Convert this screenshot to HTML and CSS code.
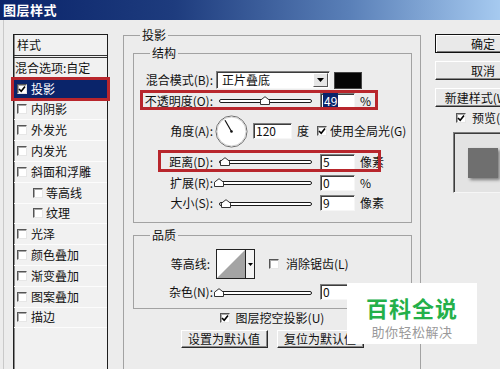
FILE: index.html
```html
<!DOCTYPE html>
<html lang="zh">
<head>
<meta charset="utf-8">
<title>图层样式</title>
<link rel="stylesheet" href="styles.css">
</head>
<body>
<div class="window">
  <div class="titlebar">图层样式</div>
  <div class="dialog">
    <div class="stylelist">
      <div class="sl-head">样式</div>
      <div class="sl-row plain">混合选项:自定</div>
      <div class="sl-row selected hl"><span class="cb"><svg viewBox="0 0 8 8" width="8" height="8"><path d="M1 4 L3.2 6.3 L7 1.5" fill="none" stroke="#000" stroke-width="1.6"/></svg></span>投影</div>
      <div class="sl-row"><span class="cb"></span>内阴影</div>
      <div class="sl-row"><span class="cb"></span>外发光</div>
      <div class="sl-row"><span class="cb"></span>内发光</div>
      <div class="sl-row"><span class="cb"></span>斜面和浮雕</div>
      <div class="sl-row sub"><span class="cb"></span>等高线</div>
      <div class="sl-row sub"><span class="cb"></span>纹理</div>
      <div class="sl-row"><span class="cb"></span>光泽</div>
      <div class="sl-row"><span class="cb"></span>颜色叠加</div>
      <div class="sl-row"><span class="cb"></span>渐变叠加</div>
      <div class="sl-row"><span class="cb"></span>图案叠加</div>
      <div class="sl-row"><span class="cb"></span>描边</div>
    </div>

    <fieldset class="group outer">
      <legend>投影</legend>
      <fieldset class="group inner struct">
        <legend>结构</legend>
        <div class="row h20">
          <span class="lbl">混合模式(B):</span>
          <div class="select sunk"><span>正片叠底</span><span class="sel-btn"><svg viewBox="0 0 7 4" width="7" height="4"><path d="M0 0 H7 L3.5 4 Z" fill="#000"/></svg></span></div>
          <div class="swatch"></div>
        </div>
        <div class="row h21 hl hl-op">
          <span class="lbl">不透明度(O):</span>
          <div class="slider"><div class="track"></div><svg class="thumb" style="left:49%" viewBox="0 0 10 9" width="10" height="9"><path d="M0.5 8.5 V4.2 L5 0.7 L9.5 4.2 V8.5 Z" fill="#fff" stroke="#333"/></svg></div>
          <div class="field sunk"><span class="selected-text">49</span></div>
          <span class="unit">%</span>
        </div>
        <div class="row h40">
          <span class="lbl">角度(A):</span>
          <svg class="dial" viewBox="0 0 33 33" width="33" height="33"><circle cx="16.5" cy="16.5" r="15.5" fill="#fff" stroke="#666"/><circle cx="16.5" cy="16.5" r="14.5" fill="none" stroke="#d0d0d0"/><line x1="16.5" y1="16.5" x2="10" y2="5.3" stroke="#111" stroke-width="1.2"/><circle cx="16.5" cy="16.5" r="1.3" fill="#111"/></svg>
          <div class="field sunk w39">120</div>
          <span class="unit">度</span>
          <span class="cb gl"><svg viewBox="0 0 8 8" width="8" height="8"><path d="M1 4 L3.2 6.3 L7 1.5" fill="none" stroke="#000" stroke-width="1.6"/></svg></span>
          <span class="cbtext">使用全局光(G)</span>
        </div>
        <div class="row h21 hl hl-dist">
          <span class="lbl">距离(D):</span>
          <div class="slider"><div class="track"></div><svg class="thumb" style="left:6%" viewBox="0 0 10 9" width="10" height="9"><path d="M0.5 8.5 V4.2 L5 0.7 L9.5 4.2 V8.5 Z" fill="#fff" stroke="#333"/></svg></div>
          <div class="field sunk">5</div>
          <span class="unit">像素</span>
        </div>
        <div class="row h21">
          <span class="lbl">扩展(R):</span>
          <div class="slider"><div class="track"></div><svg class="thumb" style="left:0%" viewBox="0 0 10 9" width="10" height="9"><path d="M0.5 8.5 V4.2 L5 0.7 L9.5 4.2 V8.5 Z" fill="#fff" stroke="#333"/></svg></div>
          <div class="field sunk">0</div>
          <span class="unit">%</span>
        </div>
        <div class="row h20">
          <span class="lbl">大小(S):</span>
          <div class="slider"><div class="track"></div><svg class="thumb" style="left:8%" viewBox="0 0 10 9" width="10" height="9"><path d="M0.5 8.5 V4.2 L5 0.7 L9.5 4.2 V8.5 Z" fill="#fff" stroke="#333"/></svg></div>
          <div class="field sunk">9</div>
          <span class="unit">像素</span>
        </div>
      </fieldset>

      <fieldset class="group inner quality">
        <legend>品质</legend>
        <div class="row h30">
          <span class="lbl lbl-c">等高线:</span>
          <div class="contour">
            <svg class="contour-img" viewBox="0 0 28 28" width="28" height="28"><rect width="28" height="28" fill="#fff"/><path d="M0 28 L28 0 V28 Z" fill="#a4a4a4"/></svg>
            <span class="contour-btn"><svg viewBox="0 0 5 3" width="5" height="3"><path d="M0 0 H5 L2.5 3 Z" fill="#000"/></svg></span>
          </div>
          <span class="cb aa"></span>
          <span class="cbtext wide">消除锯齿(L)</span>
        </div>
        <div class="row h20 noise">
          <span class="lbl">杂色(N):</span>
          <div class="slider"><div class="track"></div><svg class="thumb" style="left:0%" viewBox="0 0 10 9" width="10" height="9"><path d="M0.5 8.5 V4.2 L5 0.7 L9.5 4.2 V8.5 Z" fill="#fff" stroke="#333"/></svg></div>
          <div class="field sunk">0</div>
          <span class="unit">%</span>
        </div>
      </fieldset>

      <div class="knock">
        <span class="cb"><svg viewBox="0 0 8 8" width="8" height="8"><path d="M1 4 L3.2 6.3 L7 1.5" fill="none" stroke="#000" stroke-width="1.6"/></svg></span>
        <span>图层挖空投影(U)</span>
      </div>
      <div class="defaults">
        <div class="btn">设置为默认值</div>
        <div class="btn">复位为默认值</div>
      </div>
    </fieldset>

    <div class="side">
      <div class="btn big default">确定</div>
      <div class="btn big">取消</div>
      <div class="btn big">新建样式(W)...</div>
      <div class="preview-toggle">
        <span class="cb"><svg viewBox="0 0 8 8" width="8" height="8"><path d="M1 4 L3.2 6.3 L7 1.5" fill="none" stroke="#000" stroke-width="1.6"/></svg></span>
        <span>预览(V)</span>
      </div>
      <div class="preview sunk"><div class="preview-square"></div></div>
    </div>
  </div>

  <div class="watermark">
    <div class="wm-title">百科全说</div>
    <div class="wm-sub">助你轻松解决</div>
  </div>
</div>
</body>
</html>
```
FILE: styles.css
```css
* { box-sizing: border-box; }
html, body { margin: 0; padding: 0; }
body {
  width: 500px;
  height: 369px;
  overflow: hidden;
  background: #ececec;
  color: #111;
  font-family: "Noto Sans CJK SC", "Noto Sans", sans-serif;
  font-size: 12px;
  line-height: 14px;
}
.window { position: relative; width: 500px; height: 369px; overflow: hidden; }

.titlebar {
  height: 20px;
  padding-left: 3px;
  background: linear-gradient(90deg, #0a246a 0%, #1e3c7e 35%, #5a80b8 70%, #a6caf0 100%);
  color: #fff;
  font-weight: bold;
  font-size: 13px;
  line-height: 20px;
  letter-spacing: 0.5px;
}

.dialog {
  display: flex;
  align-items: flex-start;
  height: 349px;
  margin-left: 3px;
  border-left: 1px solid #c9c9c9;
}

/* ---------- style list ---------- */
.stylelist {
  flex: none;
  width: 95px;
  height: 400px;
  margin: 14px 0 0 9px;
  border: 1px solid #1e1e1e;
  box-shadow: inset 1px 0 0 #8a8a8a;
  background: #f1f1f1;
}
.sl-head {
  height: 23px;
  padding-left: 3px;
  line-height: 20px;
  border-bottom: 3px double #333;
}
.sl-row {
  position: relative;
  display: flex;
  align-items: center;
  gap: 4px;
  height: 20.8px;
  padding-left: 3px;
  border-bottom: 1px solid #fcfcfc;
  white-space: nowrap;
}
.sl-row.plain { padding-left: 1px; }
.sl-row.sub { padding-left: 19px; gap: 3px; }
.sl-row.selected { background: #0a246a; color: #fff; }
.sl-row.hl::after { left: -3px; right: -3px; top: -2px; bottom: -2px; }

.hl { position: relative; }
.hl::after {
  content: "";
  position: absolute;
  border: 3px solid #b8262c;
  pointer-events: none;
}

/* ---------- checkbox ---------- */
.cb {
  flex: none;
  display: inline-flex;
  align-items: center;
  justify-content: center;
  width: 10px;
  height: 10px;
  background: #fff;
  border: 1px solid;
  border-color: #555 #e6e6e6 #e6e6e6 #555;
  box-shadow: inset 1px 1px 0 #a8a8a8;
}

/* ---------- group boxes ---------- */
.group {
  margin: 0;
  min-width: 0;
  border: 1px solid #a2a2a2;
}
.group > legend {
  padding: 0 2px;
  font-size: 12px;
  line-height: 14px;
}
.outer {
  flex: none;
  width: 298px;
  height: 360px;
  margin: 8px 0 0 15px;
  padding: 4px 0 0 0;
}
.outer > legend { margin-left: 16px; }
.inner {
  width: 279px;
  margin-left: 9px;
}
.inner > legend { margin-left: 16px; }
.struct { padding: 10px 0 9px 0; }
.quality { margin-top: 5px; padding: 7px 0 6px 0; }

.row { display: flex; align-items: center; white-space: nowrap; }
.h20 { height: 20px; }
.h21 { height: 21px; }
.h30 { height: 30px; }
.h40 { height: 40px; }
.noise { margin-top: 3px; }
.lbl { flex: none; width: 79px; text-align: right; }
.lbl-c { padding-right: 3px; }

.hl-op::after { left: 6px; right: 33px; top: 0; bottom: 1px; }
.hl-dist::after { left: 24px; right: 30px; top: -1px; bottom: 0; }

.sunk {
  background: #fff;
  border: 1px solid;
  border-color: #7e7e7e #f6f6f6 #f6f6f6 #7e7e7e;
  box-shadow: inset 1px 1px 0 #3c3c3c;
}

.select {
  flex: none;
  display: flex;
  align-items: center;
  width: 114px;
  height: 18px;
  margin-left: 3px;
  padding: 0 1px 0 5px;
}
.sel-btn {
  display: flex;
  align-items: center;
  justify-content: center;
  width: 15px;
  height: 14px;
  margin-left: auto;
  background: #e6e6e6;
  border: 1px solid;
  border-color: #fff #555 #555 #fff;
}
.swatch {
  flex: none;
  width: 28px;
  height: 17px;
  margin-left: 4px;
  background: #050505;
  border: 1px solid #444;
}

.slider {
  position: relative;
  flex: none;
  width: 93px;
  height: 9px;
  margin-left: 6px;
}
.track {
  height: 4px;
  margin-top: 3px;
  border: 1px solid #1a1a1a;
  border-radius: 2px;
  background: #fff;
}
.thumb {
  position: absolute;
  top: 0;
  margin-left: -5px;
}

.field {
  flex: none;
  width: 35px;
  height: 16px;
  margin-left: 8px;
  padding-left: 2px;
  line-height: 14px;
}
.field.w39 { width: 39px; margin-left: 5px; }
.selected-text { background: #0a246a; color: #fff; padding: 0 1px; }
.unit { margin-left: 5px; }

.dial { flex: none; margin-left: 2px; }
.cb.gl { margin-left: 8px; }
.cbtext { margin-left: 3px; }
.cbtext.wide { margin-left: 7px; }

.contour {
  flex: none;
  display: flex;
  height: 30px;
  margin-left: 3px;
  border: 1px solid #222;
  background: #fff;
}
.contour-img { display: block; }
.contour-btn {
  display: flex;
  align-items: center;
  justify-content: center;
  width: 9px;
  border-left: 1px solid #222;
  background: #f4f4f4;
}
.cb.aa { margin-left: 14px; }

.knock {
  display: flex;
  align-items: center;
  justify-content: center;
  gap: 6px;
  height: 16px;
  margin-top: 1px;
}
.defaults {
  display: flex;
  justify-content: center;
  gap: 9px;
  margin-top: 4px;
}

.btn {
  flex: none;
  width: 87px;
  height: 18px;
  background: #e9e9e9;
  border: 1px solid;
  border-color: #fff #2a2a2a #2a2a2a #fff;
  box-shadow: inset -1px -1px 0 #8a8a8a;
  text-align: center;
  line-height: 16px;
  white-space: nowrap;
}

/* ---------- right side ---------- */
.side {
  flex: none;
  display: flex;
  flex-direction: column;
  width: 96px;
  margin: 14px 0 0 14px;
}
.btn.big { width: 96px; height: 19px; line-height: 17px; }
.btn.big + .btn.big { margin-top: 8px; }
.btn.default { border-color: #111; box-shadow: inset 1px 1px 0 #fff, inset -1px -1px 0 #7a7a7a; }
.preview-toggle {
  display: flex;
  align-items: center;
  gap: 6px;
  height: 16px;
  margin-top: 3px;
  padding-left: 21px;
  white-space: nowrap;
}
.preview {
  display: flex;
  align-items: center;
  justify-content: center;
  width: 60px;
  height: 61px;
  margin: 6px 0 0 18px;
  background: #e3e3e3;
}
.preview-square {
  width: 30px;
  height: 30px;
  background: #6f6f6f;
  box-shadow: 2px 2px 3px rgba(0, 0, 0, 0.45);
}

/* ---------- watermark ---------- */
.watermark {
  position: absolute;
  left: 347px;
  top: 283px;
  width: 130px;
  height: 61px;
  padding-top: 11px;
  background: #fff;
  text-align: center;
}
.wm-title {
  color: #24b04a;
  font-size: 22px;
  font-weight: bold;
  line-height: 26px;
  letter-spacing: 1px;
}
.wm-sub {
  margin-top: 5px;
  color: #9a9a9a;
  font-size: 13px;
  line-height: 14px;
  letter-spacing: 0.5px;
}
```
